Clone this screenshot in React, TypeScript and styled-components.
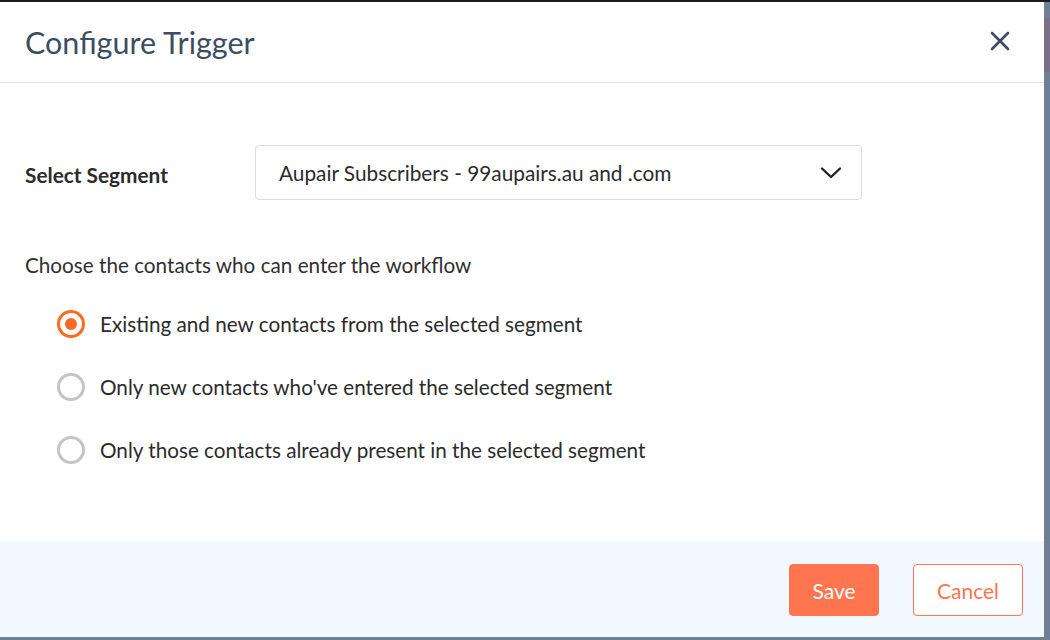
import React, { useState } from "react";
import styled, { createGlobalStyle } from "styled-components";

const Global = createGlobalStyle`
  html, body { margin: 0; padding: 0; }
  body { font-family: Lato, "Noto Sans", sans-serif; background: #6d8098; }
  * { box-sizing: border-box; }
`;

const Page = styled.div`
  width: 1050px;
  height: 640px;
  border-top: 2px solid #1b1b1d;
  display: flex;
  align-items: flex-start;
  background: #6d8098;
  position: relative;
  overflow: hidden;
`;

const BackdropBand = styled.div`
  position: absolute;
  right: 0;
  top: 16px;
  width: 6px;
  height: 54px;
  background: #7a7189;
`;

const Modal = styled.div`
  width: 1044px;
  height: 635px;
  background: #ffffff;
  display: flex;
  flex-direction: column;
`;

const Header = styled.div`
  height: 81px;
  border-bottom: 1px solid #e7e7e7;
  display: flex;
  align-items: center;
  justify-content: space-between;
  padding: 0 30px 0 25px;
`;

const Title = styled.h2`
  margin: 0;
  font-weight: 400;
  font-size: 30.5px;
  color: #3d4d61;
`;

const CloseButton = styled.button`
  border: 0;
  background: transparent;
  padding: 0;
  width: 28px;
  height: 28px;
  display: flex;
  align-items: center;
  justify-content: center;
  cursor: pointer;
  margin-top: -2px;
`;

const Body = styled.div`
  flex: 1;
  padding: 62px 25px 0 25px;
  display: flex;
  flex-direction: column;
`;

const FieldRow = styled.div`
  display: flex;
  align-items: center;
`;

const FieldLabel = styled.label`
  width: 230px;
  font-weight: 700;
  font-size: 20.8px;
  color: #2b2b2b;
  margin-top: 4px;
`;

const SelectBox = styled.div`
  width: 607px;
  height: 55px;
  border: 1px solid #dcdcdc;
  border-radius: 4px;
  display: flex;
  align-items: center;
  justify-content: space-between;
  padding: 0 19px 0 23px;
  font-size: 20.8px;
  color: #2b2b2b;
`;

const Question = styled.p`
  margin: 53px 0 0 0;
  font-size: 20.7px;
  color: #2f2f2f;
`;

const RadioList = styled.div`
  margin-top: 33px;
  padding-left: 32px;
  display: flex;
  flex-direction: column;
  gap: 35px;
`;

const RadioRow = styled.label`
  display: flex;
  align-items: center;
  gap: 15px;
  font-size: 20.7px;
  color: #2b2b2b;
  cursor: pointer;
  height: 28px;
`;

const RadioCircle = styled.span<{ $checked: boolean }>`
  width: 28px;
  height: 28px;
  border-radius: 50%;
  border: 3px solid ${(p) => (p.$checked ? "#ff6a21" : "#c4c4c4")};
  display: flex;
  align-items: center;
  justify-content: center;
  flex-shrink: 0;
  &::after {
    content: "";
    width: 12px;
    height: 12px;
    border-radius: 50%;
    background: ${(p) => (p.$checked ? "#ff6a21" : "transparent")};
  }
`;

const Footer = styled.div`
  height: 96px;
  background: #f1f8fe;
  display: flex;
  align-items: center;
  justify-content: flex-end;
  gap: 34px;
  padding: 2px 21px 0 0;
`;

const Button = styled.button<{ $primary?: boolean }>`
  height: 52px;
  min-width: ${(p) => (p.$primary ? "90px" : "110px")};
  border-radius: 4px;
  font-family: Lato, "Noto Sans", sans-serif;
  font-size: 21px;
  padding: 0 20px;
  cursor: pointer;
  border: 1px solid #ff7550;
  background: ${(p) => (p.$primary ? "#ff7550" : "#ffffff")};
  color: ${(p) => (p.$primary ? "#ffffff" : "#ff7550")};
`;

const options = [
  "Existing and new contacts from the selected segment",
  "Only new contacts who've entered the selected segment",
  "Only those contacts already present in the selected segment",
];

export default function App() {
  const [selected, setSelected] = useState(0);
  return (
    <>
      <Global />
      <Page>
        <Modal>
          <Header>
            <Title>Configure Trigger</Title>
            <CloseButton aria-label="Close">
              <svg width="20" height="20" viewBox="0 0 20 20">
                <path d="M2 2L18 18M18 2L2 18" stroke="#3d4d61" strokeWidth="2.6" strokeLinecap="round" />
              </svg>
            </CloseButton>
          </Header>
          <Body>
            <FieldRow>
              <FieldLabel>Select Segment</FieldLabel>
              <SelectBox>
                <span>Aupair Subscribers - 99aupairs.au and .com</span>
                <svg width="22" height="14" viewBox="0 0 22 14">
                  <path d="M2 2.5L11 11L20 2.5" fill="none" stroke="#222" strokeWidth="2.4" strokeLinecap="round" strokeLinejoin="round" />
                </svg>
              </SelectBox>
            </FieldRow>
            <Question>Choose the contacts who can enter the workflow</Question>
            <RadioList>
              {options.map((o, i) => (
                <RadioRow key={o} onClick={() => setSelected(i)}>
                  <RadioCircle $checked={selected === i} />
                  <span>{o}</span>
                </RadioRow>
              ))}
            </RadioList>
          </Body>
          <Footer>
            <Button $primary>Save</Button>
            <Button>Cancel</Button>
          </Footer>
        </Modal>
        <BackdropBand />
      </Page>
    </>
  );
}
